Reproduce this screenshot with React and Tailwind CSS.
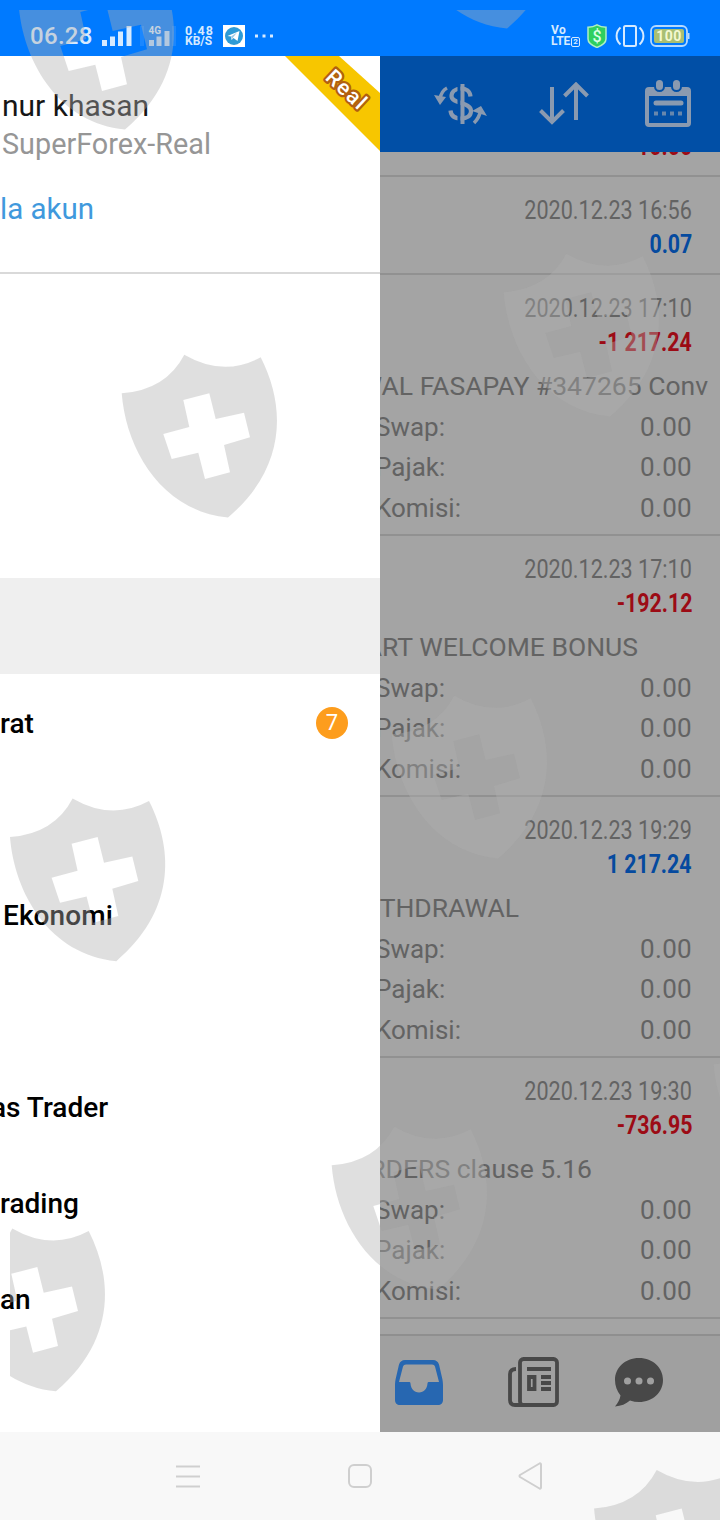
const history = [
    { date: '2020.12.22 11:08', value: '10.00' },
    { date: '2020.12.23 16:56', value: '0.07', positive: true },
    { date: '2020.12.23 17:10', value: '-1 217.24', comment: 'WAL FASAPAY #347265 Conv', commentWidth: 'w-[328px]' },
    { date: '2020.12.23 17:10', value: '-192.12', comment: 'ART WELCOME BONUS', commentWidth: 'w-[258px]' },
    { date: '2020.12.23 19:29', value: '1 217.24', positive: true, comment: 'THDRAWAL', commentWidth: 'w-[139px]' },
    { date: '2020.12.23 19:30', value: '-736.95', comment: 'RDERS clause 5.16', commentWidth: 'w-[212px]' },
];

const menu = [
    { label: 'rat', badge: 7 },
    { label: '' },
    { label: 'Ekonomi', indent: true },
    { label: '' },
    { label: 'as Trader', shift: true },
    { label: 'rading' },
    { label: 'an' },
];

const shields = [
    [18, -34],
    [400, -135],
    [503, 253],
    [121, 354],
    [391, 695],
    [9.3, 797.7],
    [713, 1025],
    [331, 1126],
    [-51, 1227.8],
    [593.4, 1469.3],
];

function StatusBar() {
    return (
        <div className="h-14 bg-[#007aff] flex items-center text-[#d6eaff] pt-4 pl-[30px] pr-[30px]">
            <span className="text-[24px] leading-10 font-medium w-[72px] tracking-[0.3px]">06.28</span>
            <svg className="w-[30px] h-5" viewBox="0 0 30 20" fill="currentColor">
                <path d="M0 14h5v6H0zM8 10.500h5V20H8zM16 5.500h5V20h-5zM24.500 0h5v20h-5z" />
            </svg>
            <svg className="w-[36px] h-5 ml-2" viewBox="0 0 36 20" fill="currentColor">
                <path d="M0 0h4v20H0zM32 0h4v20h-4z" opacity=".12" />
                <path d="M9 14h5v6H9zM16.500 10.500h5V20h-5zM24.500 5h5v15h-5z" opacity=".85" />
                <text x="8.500" y="8" fontSize="10" fontWeight="700" fontFamily="Roboto">4G</text>
            </svg>
            <div className="ml-[9px] w-[38px] text-[12.5px] leading-[11.5px] font-bold">
                <p className="tracking-[0.9px]">0.48</p>
                <p className="text-[12px]">KB/S</p>
            </div>
            <svg className="w-[22px] h-[22px]" viewBox="0 0 22 22">
                <path fill="#fff" d="M0 0h22v22H0z" />
                <circle cx="11" cy="11" r="9" fill="#2e9bd6" />
                <path d="M4.500 11L16.500 6l-2 10-4-3-2 2-.5-3.500z" fill="#fff" />
                <path d="M8 11.500L14 7.500l-4 5-1 2z" fill="#9cc9e4" />
            </svg>
            <svg className="w-[18px] h-1 ml-2.5" viewBox="0 0 18 4" fill="currentColor">
                <path d="M0 .5h3v3H0zM7.500 .5h3v3h-3zM15 .5h3v3h-3z" />
            </svg>
            <div className="ml-auto w-9 text-[12px] leading-[11.5px] font-bold">
                <p className="tracking-[0.5px]">Vo</p>
                <p className="flex items-center">LTE<span className="border border-current rounded-xs text-[8px] leading-[8px] px-px ml-px">2</span></p>
            </div>
            <svg className="w-5 h-6" viewBox="0 0 20 24">
                <path d="M10 .8C7 2.600 4 3.200 1 3.300V15c0 4 4 6.500 9 8.500 5-2 9-4.500 9-8.500V3.300C16 3.200 13 2.600 10 .8z" fill="#2fcf5f" stroke="#aef0c3" strokeWidth="1.500" />
                <text x="10" y="17.500" textAnchor="middle" fontSize="16" fontWeight="500" fontFamily="Roboto" fill="#d8ffe4">$</text>
            </svg>
            <svg className="w-[30px] h-[22px] ml-2" viewBox="0 0 30 22" fill="none" stroke="currentColor" strokeWidth="2">
                <rect x="9" y="1" width="12" height="20" rx="1.500" />
                <path d="M5.500 2.500C.3 7 .3 15 5.500 19.500M24.500 2.500c5.200 4.500 5.200 12.500 0 17" />
            </svg>
            <svg className="w-10 h-[22px] ml-[5px]" viewBox="0 0 40 22">
                <rect x="1" y="1" width="36" height="20" rx="5" fill="none" stroke="#b5d9ff" strokeWidth="1.800" />
                <rect x="4" y="4" width="30" height="14" rx="2" fill="#a9bf73" />
                <path d="M38 8h1.500v6H38z" fill="#b5d9ff" />
                <text x="19" y="16" textAnchor="middle" fontSize="14" fontWeight="700" fontFamily="Roboto" fill="#f4f8d0" letterSpacing=".5">100</text>
            </svg>
        </div>
    );
}

function Toolbar() {
    return (
        <div className="h-24 shrink-0 bg-[#014fa6] flex items-center pl-[54px] text-[#8a9ab0]">
            <svg className="w-[54px] h-[44px]" viewBox="0 0 54 44" fill="none" stroke="currentColor">
                <path d="M36.500 14.500C36 9 32 6.500 27 6.500c-6 0-9.500 3.500-9.500 7.500C17.500 22.500 37 19.500 37 29c0 5-4 7.500-10 7.500-6 0-10-2.500-10.500-8" strokeWidth="4.200" />
                <path d="M25 2v40" stroke="#014fa6" strokeWidth="3" />
                <path d="M28.500 2v40" strokeWidth="4" />
                <path d="M0 13l12 2-6 8z" fill="currentColor" stroke="none" />
                <path d="M13 6C9 8 7 11 6 17M40 41c4-4 6-8 6.500-13" strokeWidth="3.500" />
                <path d="M38 29l9-5 6 10z" fill="currentColor" stroke="none" />
            </svg>
            <svg className="w-[50px] h-[44px] ml-[51px]" viewBox="0 0 50 44" fill="none" stroke="currentColor" strokeWidth="4">
                <path d="M13 5v35M1.500 28.500L13 40l11.500-11.500M37 38V3M25.500 14L37 2.500 48.500 14" />
            </svg>
            <svg className="w-[46px] h-[48px] ml-[56px]" viewBox="0 0 46 48">
                <rect x="2" y="9" width="42" height="36" rx="2" fill="none" stroke="currentColor" strokeWidth="4" />
                <path d="M2 8h42v8H2z" fill="currentColor" />
                <g stroke="#014fa6" strokeWidth="2" fill="currentColor">
                    <rect x="10" y="-1" width="9" height="12" rx="4.500" />
                    <rect x="27" y="-1" width="9" height="12" rx="4.500" />
                </g>
                <path d="M11 23h25" stroke="currentColor" strokeWidth="5" strokeLinecap="round" />
                <path d="M9 33.500h28.500" stroke="currentColor" strokeWidth="4" strokeDasharray="4 4" opacity=".75" />
            </svg>
        </div>
    );
}

function Detail({ label, className }) {
    return (
        <div className={`flex justify-between -ml-[5px] ${className}`}>
            <span>{label}</span>
            <span className="tracking-[0.3px]">0.00</span>
        </div>
    );
}

function HistoryRow({ item }) {
    return (
        <div className="pt-4 pr-7 border-b-2 border-[#919191] text-[26px] text-[#636363]">
            <p className="text-right leading-[34px]">
                <span className="inline-block origin-right scale-x-[0.83]">{item.date}</span>
            </p>
            <p className={`text-right leading-[34px] font-bold ${item.positive ? 'text-[#054a9f]' : 'text-[#9c0b15]'}`}>
                <span className="inline-block origin-right scale-x-[0.82]">{item.value}</span>
            </p>
            {item.comment ? (
                <div className="mt-1.5 pb-1">
                    <p className={`flex justify-end whitespace-nowrap text-[26.5px] leading-[41px] mb-px ${item.commentWidth}`}>{item.comment}</p>
                    <Detail label="Swap:" className="leading-[41px]" />
                    <Detail label="Pajak:" className="leading-[39px]" />
                    <Detail label="Komisi:" className="leading-[43px]" />
                </div>
            ) : (
                <div className="h-3" />
            )}
        </div>
    );
}

function TabBar() {
    return (
        <div className="h-[98px] shrink-0 border-t-2 border-[#8f8f8f] bg-[#a0a0a0] flex items-center pl-3.5 pb-1 text-[#484848]">
            <svg className="w-[50px] h-[45px]" viewBox="0 0 50 45">
                <path fillRule="evenodd" fill="#2767b1" d="M11 0h28c3 0 5 1.500 6 4.500l3 13c.7 3 1 5 1 8V40c0 3-2 5-5 5H6c-3 0-5-2-5-5V25.500c0-3 .3-5 1-8l3-13C6 1.500 8 0 11 0zM12 4.500c-1.500 0-2.500.8-3 2L5 22h10c1 0 1.500.5 1.500 1.500C17 29 20 32.500 25 32.500s8-3.500 8.500-9c0-1 .5-1.500 1.500-1.500h10L41 6.500c-.5-1.200-1.500-2-3-2z" />
            </svg>
            <svg className="w-[51px] h-[50px] ml-16" viewBox="0 0 51 50" fill="none" stroke="currentColor" strokeWidth="3.800">
                <rect x="12" y="2" width="37" height="46" rx="3.500" />
                <path d="M8 12c-4 0-6 1.500-6 5v26c0 3.500 2 5 5 5h9" />
                <path d="M19 12h24M33 20h10M33 26h10M33 32h10" />
                <path d="M21 20h5.500v12H21z" />
            </svg>
            <svg className="w-[50px] h-[50px] ml-[55px]" viewBox="0 0 50 50">
                <path fill="currentColor" d="M25 1c14 0 24 10 24 22S39 45 25 45c-3 0-6-.5-9-1.500C12 47 7 49 1 49.500c3-4 5-7 5.500-11C3 34 1 29 1 23 1 11 11 1 25 1z" />
                <g fill="#a0a0a0">
                    <circle cx="13.500" cy="24" r="3.500" />
                    <circle cx="25" cy="24" r="3.500" />
                    <circle cx="36.500" cy="24" r="3.500" />
                </g>
            </svg>
        </div>
    );
}

function Drawer() {
    return (
        <div className="relative w-[380px] shrink-0 bg-white overflow-hidden">
            <div className="h-[218px] pt-[31px] border-b-2 border-[#d9d9d9] whitespace-nowrap">
                <p className="text-[30px] leading-[38px] text-[#161616] pl-0.5">nur khasan</p>
                <p className="text-[28.8px] leading-[38px] text-[#969696] pl-0.5">SuperForex-Real</p>
                <p className="text-[29.5px] leading-[38px] text-[#4099dd] mt-[27px]">la akun</p>
            </div>
            <div className="h-[304px]" />
            <div className="h-24 bg-[#efefef]" />
            {menu.map((item, i) => (
                <div key={i} className="h-24 flex items-center justify-between pt-1 pr-8 text-[28px] font-medium text-black">
                    <span className={item.indent ? 'pl-[3px] tracking-[0.1px]' : item.shift ? '-ml-[9px]' : ''}>{item.label}</span>
                    {item.badge && (
                        <span className="w-8 h-8 rounded-full bg-[#fd9d1d] text-white text-[22px] font-normal leading-8 text-center -mt-0.5">{item.badge}</span>
                    )}
                </div>
            ))}
            <svg className="absolute top-0 right-0 w-24 h-24" viewBox="0 0 96 96">
                <path d="M1 0h54l41 37v58z" fill="#f7c600" />
                <text
                    x="0"
                    y="7"
                    transform="translate(62.500 34) rotate(43)"
                    textAnchor="middle"
                    fontFamily="Roboto"
                    fontSize="21.500"
                    fontWeight="500"
                    letterSpacing="1.500"
                    fill="#fff"
                    stroke="#b2600f"
                    strokeWidth="4.500"
                    strokeLinejoin="round"
                    paintOrder="stroke"
                >
                    Real
                </text>
            </svg>
        </div>
    );
}

function NavBar() {
    return (
        <div className="h-[88px] bg-[#f8f8f8] flex items-center pl-44 text-[#cfcfcf]">
            <svg className="w-6 h-6" viewBox="0 0 24 24" stroke="currentColor" strokeWidth="2">
                <path d="M0 2.500h24M0 12.500h24M0 22.500h24" />
            </svg>
            <div className="w-6 h-6 ml-[148px] border-2 border-current rounded-md" />
            <svg className="w-6 h-7 ml-[146px]" viewBox="0 0 24 28" fill="none" stroke="currentColor" strokeWidth="2" strokeLinejoin="round">
                <path d="M21.500 1.500q1.500-.5 1.500 1v23q0 1.500-1.500 1L2 15q-1-1 0-2z" />
            </svg>
        </div>
    );
}

function ShieldPattern() {
    return (
        <svg className="absolute inset-0 w-[720px] h-[1520px] pointer-events-none" viewBox="0 0 720 1520">
            <clipPath id="area">
                <rect x="10" y="10" width="710" height="1510" />
            </clipPath>
            <g clipPath="url(#area)" fill="#afafaf" fillOpacity=".4" fillRule="evenodd">
                {shields.map(([x, y]) => (
                    <path
                        key={`${x}-${y}`}
                        transform={`translate(${x} ${y})`}
                        d="M.7 39.300Q45 36 63.300.7Q102.500 23.400 139.700 3.300C166 55 164 115 107 163.500C40 157 5 95 .7 39.300ZM62.300 46L88.300 39.300 94.700 65 123 58.700 129 83.300 103 91 109 118.300 84 125 77.300 98.700 50.700 105 42.300 80 68.300 73Z"
                    />
                ))}
            </g>
        </svg>
    );
}

export default function App() {
    return (
        <div className="relative w-[720px] h-[1520px] overflow-hidden font-[Roboto,sans-serif]">
            <StatusBar />
            <div className="flex h-[1376px]">
                <Drawer />
                <div className="flex flex-col w-[340px] h-full bg-[#a4a4a4] overflow-hidden">
                    <Toolbar />
                    <div className="flex-1 min-h-0 overflow-hidden">
                        <div className="-mt-[73px]">
                            {history.map((item, i) => (
                                <HistoryRow key={i} item={item} />
                            ))}
                        </div>
                    </div>
                    <TabBar />
                </div>
            </div>
            <NavBar />
            <ShieldPattern />
        </div>
    );
}
